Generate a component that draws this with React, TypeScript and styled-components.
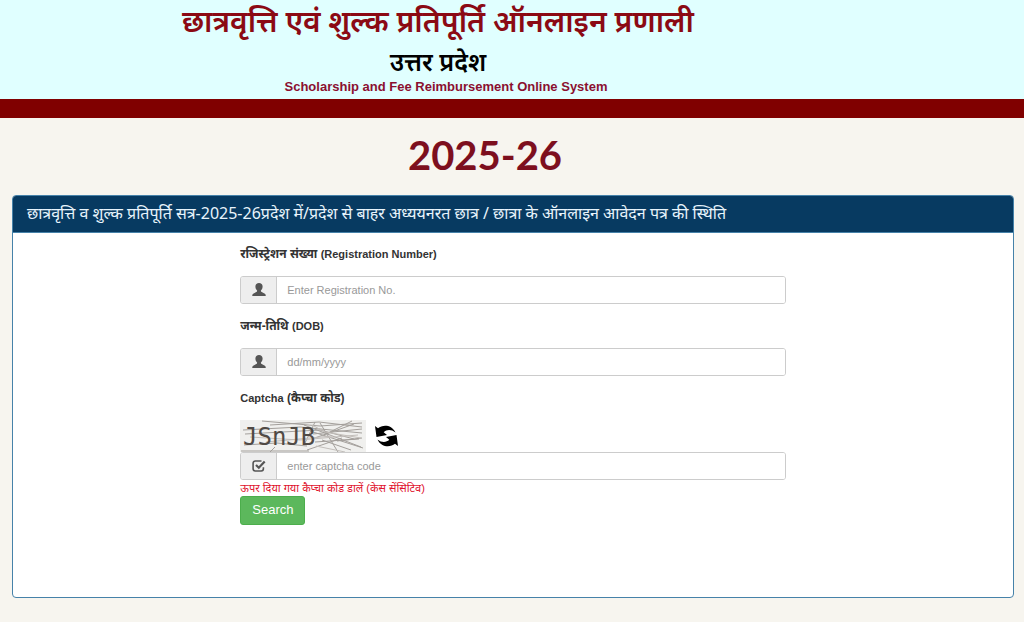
import React from "react";
import styled, { createGlobalStyle } from "styled-components";

const GlobalStyle = createGlobalStyle`
  *, *::before, *::after { box-sizing: border-box; }
  body {
    margin: 0;
    background: #f7f5ef;
    color: #333;
    font: 12px/20px "Liberation Sans", "Noto Sans", sans-serif;
  }
`;

const Banner = styled.header`
  display: flex;
  flex-direction: column;
  align-items: center;
  padding-right: 148px;
  background: #e0ffff;
  border-bottom: 19px solid #800000;
`;

const SiteTitle = styled.h1`
  margin: 0;
  color: #8b0a14;
  font: 600 30px/42px "Noto Sans", sans-serif;
  white-space: nowrap;
`;

const StateName = styled.p`
  margin: 0;
  color: #000;
  font: 600 25px/38px "Noto Sans", sans-serif;
`;

const EnglishTitle = styled.p`
  margin: 0;
  padding: 0 0 5px 16px;
  color: #8b1030;
  font-size: 13px;
  line-height: 14px;
  font-weight: 700;
`;

const Session = styled.h2`
  margin: 0;
  padding: 13px 54px 16px 0;
  color: #7d0f1e;
  font: 700 40px/48px Lato, sans-serif;
  text-align: center;
`;

const Panel = styled.section`
  margin: 0 10px 24px 12px;
  min-height: 403px;
  background: #fff;
  border: 1px solid #4682a9;
  border-radius: 4px;
  overflow: hidden;
`;

const PanelTitle = styled.h3`
  margin: 0;
  padding: 0 14px 2px;
  background: #073a61;
  border-bottom: 1px solid #4682a9;
  color: #e8f4fc;
  font: 400 16px/34px "Noto Sans", sans-serif;
`;

const PanelBody = styled.div`
  display: grid;
  grid-template-columns: 5fr 12fr 5fr;
  padding-top: 11px;
`;

const Form = styled.form`
  grid-column: 2;
`;

const Field = styled.div`
  margin-bottom: 12px;
`;

const Label = styled.label`
  display: block;
  margin-bottom: 12px;
  font-weight: 700;
`;

const Latin = styled.span`
  font-size: 11px;
`;

const InputGroup = styled.div`
  display: flex;
  height: 28px;
  border: 1px solid #ccc;
  border-radius: 3px;
  overflow: hidden;
`;

const Addon = styled.span`
  display: flex;
  align-items: center;
  justify-content: center;
  width: 36px;
  background: #eee;
  border-right: 1px solid #ccc;
  color: #555;
`;

const TextInput = styled.input`
  flex: 1;
  min-width: 0;
  padding: 0 10px;
  border: 0;
  outline: 0;
  background: #fff;
  color: #555;
  font: inherit;
  font-size: 11px;
  &::placeholder { color: #999; opacity: 1; }
`;

const CaptchaRow = styled.div`
  display: flex;
  align-items: center;
  gap: 8px;
  height: 32px;
`;

const RefreshButton = styled.button`
  display: flex;
  padding: 0;
  border: 0;
  background: none;
  color: #000;
  cursor: pointer;
`;

const Hint = styled.p`
  margin: 0;
  color: #e0122d;
  font-size: 11px;
  line-height: 16px;
`;

const SearchButton = styled.button`
  display: block;
  height: 29px;
  padding: 0 11px 2px;
  border: 1px solid #4cae4c;
  border-radius: 3px;
  background: #5cb85c;
  color: #fff;
  font: 13px "Liberation Sans", sans-serif;
  cursor: pointer;
`;

const UserIcon = () => (
  <svg width="14" height="14" viewBox="0 0 14 14" fill="currentColor" aria-hidden="true">
    <path d="M7 0C4.900 0 3.400 1.400 3.400 3.400c0 1.500.6 2.900 1.500 3.900.3.400.3 1.200-.2 1.500L1.600 10.400C.8 10.800.3 11.400.3 12v1h13.400v-1c0-.6-.5-1.200-1.300-1.600L9.300 8.800c-.5-.3-.5-1.100-.2-1.500.9-1 1.500-2.400 1.500-3.900C10.600 1.400 9.100 0 7 0Z" />
  </svg>
);

const CheckIcon = () => (
  <svg width="14" height="14" viewBox="0 0 14 14" fill="none" stroke="currentColor" aria-hidden="true">
    <path d="M9.500 2H3.300A2.200 2.200 0 0 0 1.100 4.200v5.600A2.200 2.200 0 0 0 3.300 12h5.900a2.200 2.200 0 0 0 2.200-2.200V8.300" strokeWidth="1.600" />
    <path d="m4 6 2.800 2.700L12.700 2.500" strokeWidth="2.200" />
  </svg>
);

const RefreshIcon = () => (
  <svg width="25" height="24" viewBox="0 0 25 24" aria-hidden="true">
    <g fill="currentColor">
      <path d="M1 2 4 4.200C8.500.6 17.500.2 21.500 8.600 17.500 5.300 12.800 5.400 9.700 8.200L13 11 2.500 13Z" />
      <path d="M24 22 21 19.800C16.500 23.400 7.500 23.800 3.500 15.400c4 3.300 8.700 3.200 11.800.4L12 13 22.500 11Z" />
    </g>
  </svg>
);

const CaptchaImage = () => (
  <svg width="126" height="32" viewBox="0 0 126 32" role="img" aria-label="JSnJB">
    <rect width="126" height="32" fill="#f0f0ee" />
    <g stroke="#a39f9b" strokeWidth="1" fill="none">
      <path d="M22 1 80 6 122 3M30 5 79 2 122 7M3 10 60 7 122 13M5 14l75-4 34 9M64 5l57 22M75 2 65 23M80 3 98 32M84 15 112 1M73 14l49-5M72 19l42-15M75 22l44-3M70 11l53 17M82 20l29 10M67 30l35-12M97 21l25-3M4 25l33-2 30 3M35 27l-5 5M1 31h68" />
      <path d="M10 17 60 20 118 15M26 22 92 16M76 26l29 6M72 5l13 7 36 6" stroke="#c2beba" />
    </g>
    <text x="3" y="25" fill="#504a45" fontFamily="DejaVu Sans Mono, monospace" fontSize="24">JSnJB</text>
  </svg>
);

export default function App() {
  return (
    <>
      <GlobalStyle />
      <Banner>
        <SiteTitle lang="hi">छात्रवृत्ति एवं शुल्क प्रतिपूर्ति ऑनलाइन प्रणाली</SiteTitle>
        <StateName lang="hi">उत्तर प्रदेश</StateName>
        <EnglishTitle>Scholarship and Fee Reimbursement Online System</EnglishTitle>
      </Banner>
      <main>
        <Session>2025-26</Session>
        <Panel>
          <PanelTitle lang="hi">
            छात्रवृत्ति व शुल्क प्रतिपूर्ति सत्र-2025-26प्रदेश में/प्रदेश से बाहर अध्ययनरत छात्र / छात्रा के ऑनलाइन आवेदन पत्र की स्थिति
          </PanelTitle>
          <PanelBody>
            <Form onSubmit={(e) => e.preventDefault()}>
              <Field>
                <Label htmlFor="registration">रजिस्ट्रेशन संख्या <Latin>(Registration Number)</Latin></Label>
                <InputGroup>
                  <Addon><UserIcon /></Addon>
                  <TextInput id="registration" placeholder="Enter Registration No." />
                </InputGroup>
              </Field>
              <Field>
                <Label htmlFor="dob">जन्म-तिथि <Latin>(DOB)</Latin></Label>
                <InputGroup>
                  <Addon><UserIcon /></Addon>
                  <TextInput id="dob" placeholder="dd/mm/yyyy" />
                </InputGroup>
              </Field>
              <Label htmlFor="captcha"><Latin>Captcha</Latin> (कैप्चा कोड)</Label>
              <CaptchaRow>
                <CaptchaImage />
                <RefreshButton type="button" aria-label="Refresh captcha"><RefreshIcon /></RefreshButton>
              </CaptchaRow>
              <InputGroup>
                <Addon><CheckIcon /></Addon>
                <TextInput id="captcha" placeholder="enter captcha code" />
              </InputGroup>
              <Hint lang="hi">ऊपर दिया गया कैप्चा कोड डालें (केस सेंसिटिव)</Hint>
              <SearchButton type="submit">Search</SearchButton>
            </Form>
          </PanelBody>
        </Panel>
      </main>
    </>
  );
}
